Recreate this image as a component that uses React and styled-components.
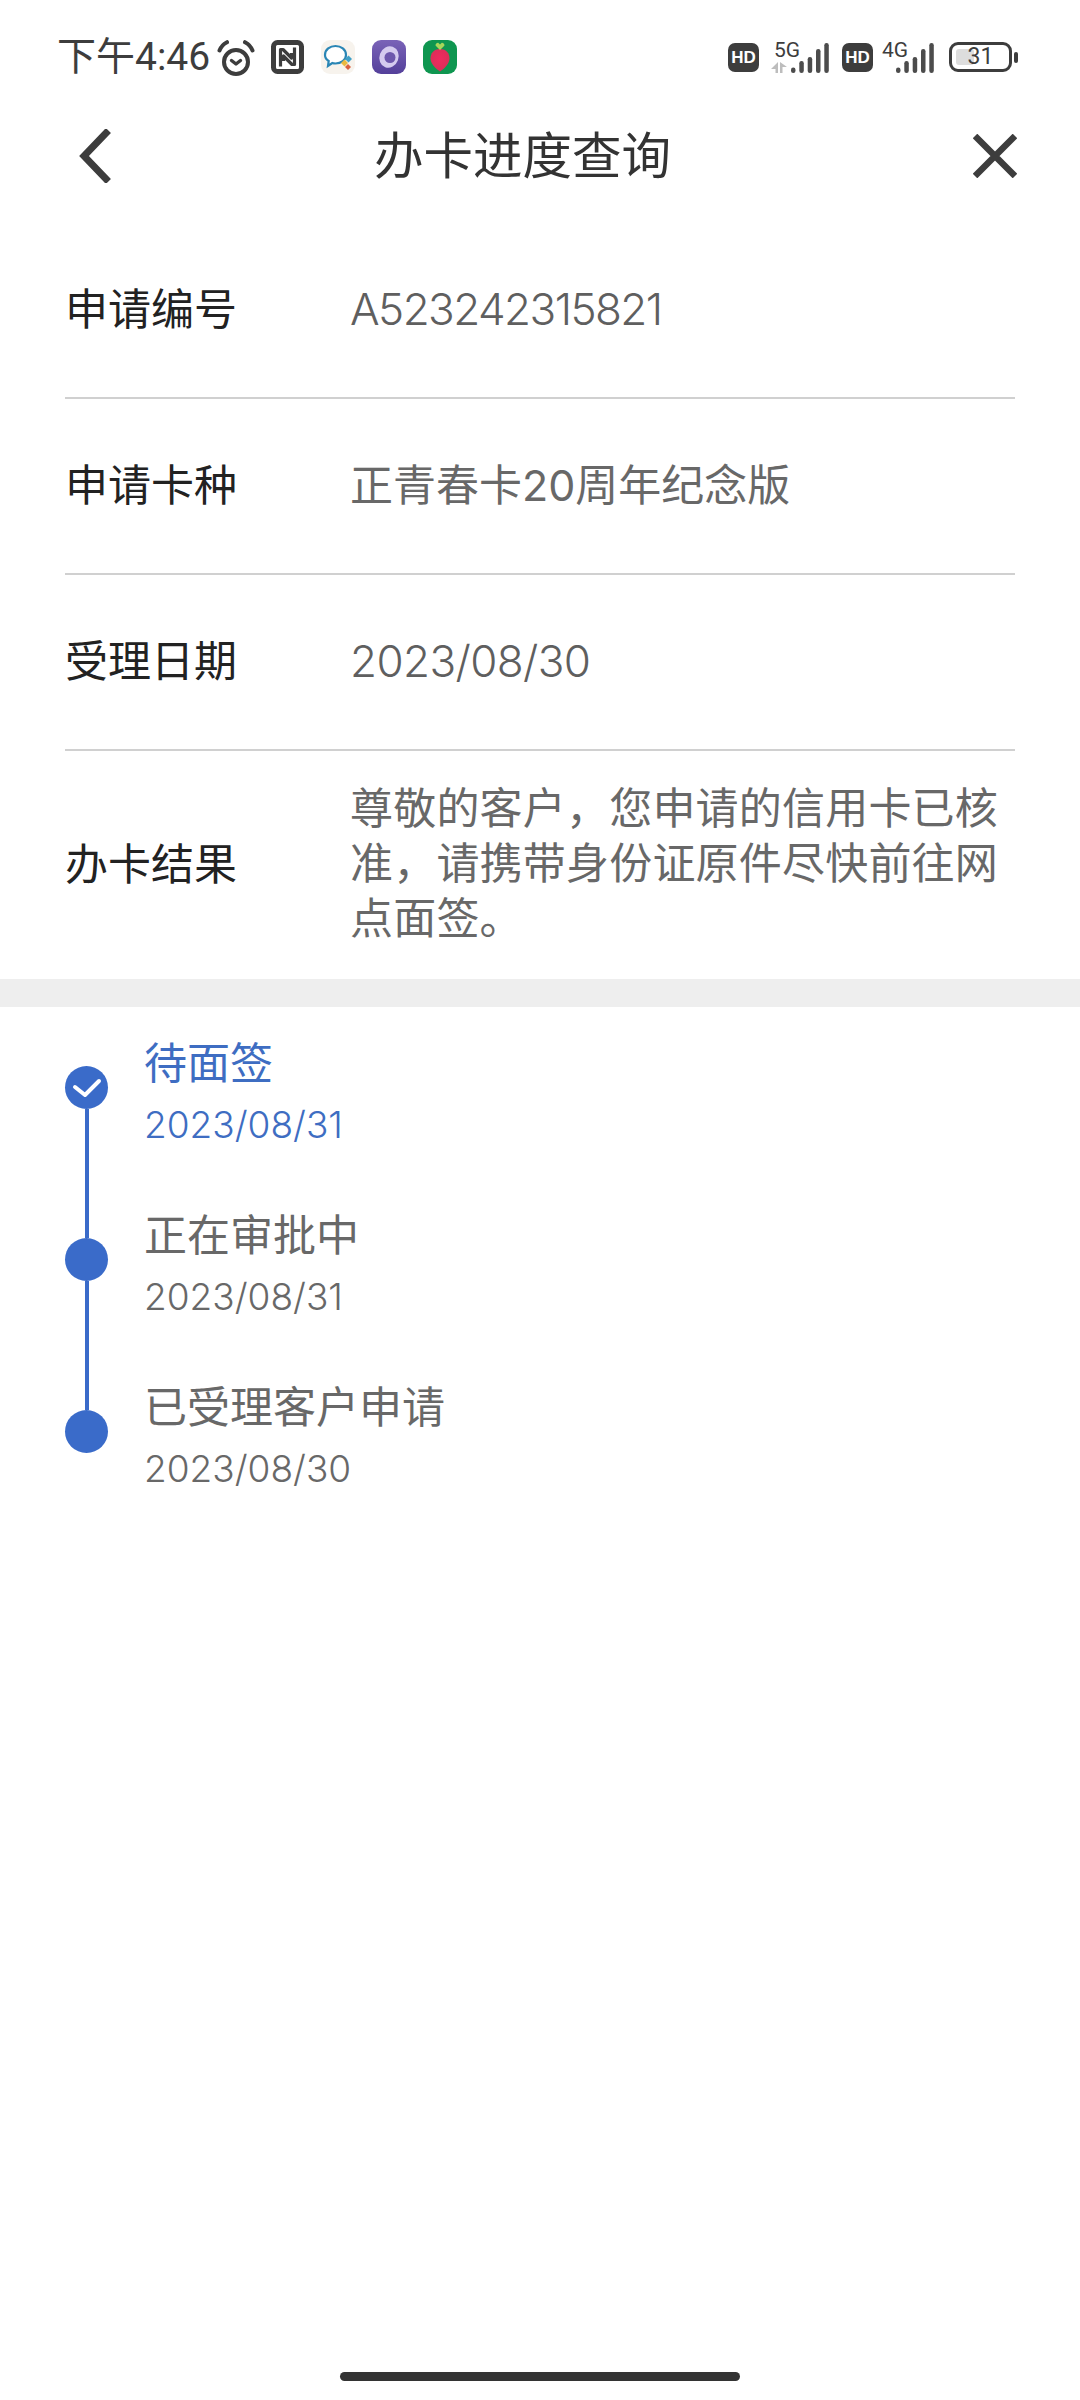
import React from "react";
import styled, { createGlobalStyle } from "styled-components";

const colors = {
  blue: "#3a6bc9",
  blueText: "#3e6dc2",
  title: "#333333",
  label: "#222222",
  value: "#686868",
  digits: "#5f5f5f",
  line: "#d0d0d0",
  band: "#eeeeee",
  icon: "#3d3d3d",
};

const rows = [
  { label: "申请编号", value: "A523242315821", latin: true, spacing: -1.55 },
  { label: "申请卡种", value: "正青春卡20周年纪念版" },
  { label: "受理日期", value: "2023/08/30", latin: true, spacing: -0.6 },
];

const steps = [
  { title: "待面签", date: "2023/08/31", active: true },
  { title: "正在审批中", date: "2023/08/31" },
  { title: "已受理客户申请", date: "2023/08/30" },
];

const Alarm = () => (
  <svg width="38" height="37" viewBox="0 0 38 37" fill="none" stroke={colors.icon} strokeWidth="4" strokeLinecap="round" strokeLinejoin="round">
    <circle cx="19" cy="23" r="12" />
    <path d="M14.5 21.5l4.500 3.500 4.500-3.500" strokeWidth="3.4" />
    <path d="M2.5 11.5C4 7.500 6.500 5 10 3.200M35.500 11.500C34 7.500 31.500 5 28 3.200" />
  </svg>
);

const Nfc = () => (
  <svg width="33" height="34" viewBox="0 0 33 34" fill="none" stroke={colors.icon} strokeLinejoin="round">
    <rect x="2.500" y="2.500" width="28" height="29" rx="4" strokeWidth="5" />
    <path d="M9.500 26.500V9.500h2.500l8.500 8.500v-5" strokeWidth="3.200" />
    <path d="M23.500 7.500v17h-2.500l-8.500-8.500v5" strokeWidth="3.200" />
  </svg>
);

const ChatApp = () => (
  <svg width="34" height="34" viewBox="0 0 34 34">
    <rect width="34" height="34" rx="9" fill="#f7f3ed" />
    <path d="M4 15c0-5.500 5-9 10.500-9S25 9.500 25 15c0 5-5 8.500-10.500 8.500-1.200 0-2.200-.1-3.200-.5L7 26l.7-5C5.200 19.500 4 17.500 4 15z" fill="#fff" stroke="#2a86b5" strokeWidth="2.200" />
    <path d="M24 19l3.500-3.500 3.500 3.500-3.500 3.500z" fill="#3fa0c8" />
    <path d="M20 23l3.500-3.500L27 23l-3.500 3.500z" fill="#e9b940" />
    <path d="M24 27l3-3 3 3-3 3z" fill="#d9603f" />
  </svg>
);

const RingApp = () => (
  <svg width="34" height="34" viewBox="0 0 34 34">
    <defs>
      <linearGradient id="ringBg" x1="0" y1="0" x2="0" y2="1">
        <stop offset="0" stopColor="#7a63b8" />
        <stop offset="1" stopColor="#54409a" />
      </linearGradient>
    </defs>
    <rect width="34" height="34" rx="9" fill="url(#ringBg)" />
    <ellipse cx="17" cy="17" rx="9.500" ry="11" fill="#d5cbef" transform="rotate(20 17 17)" />
    <circle cx="18" cy="17.500" r="5.500" fill="#6e58ad" />
  </svg>
);

const BerryApp = () => (
  <svg width="34" height="34" viewBox="0 0 34 34">
    <defs>
      <radialGradient id="berryFill" cx="0.5" cy="0.45" r="0.6">
        <stop offset="0" stopColor="#f02a5f" />
        <stop offset="1" stopColor="#d92f57" />
      </radialGradient>
    </defs>
    <rect width="34" height="34" rx="9" fill="#0f9650" />
    <path d="M17 9c6.500 0 9.500 4.500 9.500 9.500 0 5-5 10-9.500 13-4.500-3-9.500-8-9.500-13C7.500 13.500 10.500 9 17 9z" fill="url(#berryFill)" />
    <path d="M17 10l-4.500-4.500c0-2 2-3 3-2.500l1.500 1.500L18.500 3c1-.5 3 .5 3 2.500z" fill="#a8d65a" />
  </svg>
);

const Signal = () => (
  <svg width="38" height="30" viewBox="0 0 38 30" fill={colors.icon} opacity="0.92">
    <rect x="0" y="24.500" width="4.500" height="5.500" rx="2.200" />
    <rect x="8.300" y="18" width="4.500" height="12" rx="2.200" />
    <rect x="16.700" y="14" width="4.500" height="16" rx="2.200" />
    <rect x="25" y="6" width="4.500" height="24" rx="2.200" />
    <rect x="33.300" y="0" width="4.500" height="30" rx="2.200" />
  </svg>
);

const DataArrows = () => (
  <svg width="16" height="11" viewBox="0 0 16 11" fill="#bdbdbd">
    <path d="M7 0v11H4.500V7H0zM9 0l7 5h-4.500v6H9z" />
  </svg>
);

const Check = () => (
  <svg width="30" height="22" viewBox="0 0 30 22" fill="none" stroke="#fff" strokeWidth="4" strokeLinecap="round" strokeLinejoin="round">
    <path d="M3 10l10 8L27 4" />
  </svg>
);

export default function App() {
  return (
    <Page>
      <GlobalStyle />
      <StatusBar>
        <StatusLeft>
          <Time>下午4:46</Time>
          <Alarm />
          <NfcSlot>
            <Nfc />
          </NfcSlot>
          <AppIcons>
            <ChatApp />
            <RingApp />
            <BerryApp />
          </AppIcons>
        </StatusLeft>
        <StatusRight>
          <HdBadge>HD</HdBadge>
          <Network>
            <NetworkLabel $width={20}>
              <span>5G</span>
              <DataArrows />
            </NetworkLabel>
            <Signal />
          </Network>
          <HdBadge>HD</HdBadge>
          <Network $narrow>
            <NetworkLabel $width={17}>
              <span>4G</span>
            </NetworkLabel>
            <Signal />
          </Network>
          <Battery>
            <BatteryBody>
              <BatteryFill />
              <BatteryText>31</BatteryText>
            </BatteryBody>
            <BatteryCap />
          </Battery>
        </StatusRight>
      </StatusBar>

      <NavBar>
        <svg width="34" height="54" viewBox="0 0 34 54" fill="none" stroke={colors.icon} strokeWidth="7" strokeLinecap="square">
          <path d="M28 4L6 27l22 23" />
        </svg>
        <Title>办卡进度查询</Title>
        <svg width="44" height="44" viewBox="0 0 44 44" fill="none" stroke={colors.icon} strokeWidth="6.500" strokeLinecap="butt">
          <path d="M2 2l40 40M42 2L2 42" />
        </svg>
      </NavBar>

      <InfoList>
        {rows.map((row) => (
          <InfoRow key={row.label}>
            <InfoLabel>{row.label}</InfoLabel>
            <InfoValue $latin={row.latin} $spacing={row.spacing}>{row.value}</InfoValue>
          </InfoRow>
        ))}
        <ResultRow>
          <InfoLabel>办卡结果</InfoLabel>
          <ResultText $spacing={0.2}>尊敬的客户，您申请的信用卡已核准，请携带身份证原件尽快前往网点面签。</ResultText>
        </ResultRow>
      </InfoList>

      <Band />

      <Timeline>
        {steps.map((step, i) => (
          <Step key={step.title}>
            <Rail>
              <Segment $hidden={i === 0} $top />
              <Dot>{step.active && <Check />}</Dot>
              <Segment $hidden={i === steps.length - 1} />
            </Rail>
            <StepText $active={step.active}>
              <StepTitle>{step.title}</StepTitle>
              <StepDate>{step.date}</StepDate>
            </StepText>
          </Step>
        ))}
      </Timeline>

      <HomeBar />
    </Page>
  );
}

const GlobalStyle = createGlobalStyle`
  html, body {
    margin: 0;
    padding: 0;
    background: #fff;
  }
  * {
    box-sizing: border-box;
  }
  body {
    font-family: Inter, "Noto Sans CJK SC", sans-serif;
  }
`;

const Page = styled.div`
  width: 1080px;
  height: 2400px;
  display: flex;
  flex-direction: column;
  background: #fff;
  overflow: hidden;
`;

const StatusBar = styled.div`
  height: 114px;
  padding: 0 62px 0 57px;
  display: flex;
  align-items: center;
  justify-content: space-between;
`;

const StatusLeft = styled.div`
  display: flex;
  align-items: center;
`;

const Time = styled.span`
  width: 160px;
  white-space: nowrap;
  font-family: Roboto, "Noto Sans CJK SC", sans-serif;
  font-size: 39px;
  line-height: 44px;
  color: ${colors.icon};
`;

const NfcSlot = styled.div`
  display: flex;
  margin-left: 16px;
`;

const AppIcons = styled.div`
  display: flex;
  gap: 17px;
  margin-left: 17px;
`;

const StatusRight = styled.div`
  display: flex;
  align-items: center;
`;

const HdBadge = styled.span`
  width: 31px;
  height: 29px;
  border-radius: 7px;
  background: ${colors.icon};
  color: #fff;
  font: 900 17px/29px "Liberation Sans", sans-serif;
  text-align: center;
`;

const Network = styled.div`
  display: flex;
  align-items: flex-end;
  height: 32px;
  margin-left: ${(p) => (p.$narrow ? "6px" : "12px")};
  margin-right: 13px;
`;

const NetworkLabel = styled.div`
  display: flex;
  flex-direction: column;
  align-items: flex-start;
  width: ${(p) => p.$width}px;
  height: 32px;
  font-family: Roboto, sans-serif;
  font-size: 21px;
  line-height: 18px;
  white-space: nowrap;
  color: ${colors.icon};
  span {
    margin-left: 3px;
  }
  svg {
    margin-top: 3px;
  }
`;

const Battery = styled.div`
  display: flex;
  align-items: center;
  gap: 2px;
  margin-left: 2px;
`;

const BatteryBody = styled.div`
  position: relative;
  width: 63px;
  height: 30px;
  border: 3px solid ${colors.icon};
  border-radius: 9px;
  display: flex;
  align-items: center;
  justify-content: center;
`;

const BatteryFill = styled.div`
  position: absolute;
  left: 4px;
  top: 4px;
  bottom: 4px;
  width: 18px;
  background: #dddddd;
  border-radius: 3px;
`;

const BatteryText = styled.span`
  position: relative;
  font-family: Roboto, sans-serif;
  font-size: 23px;
  line-height: 24px;
  color: ${colors.icon};
`;

const BatteryCap = styled.div`
  width: 4px;
  height: 11px;
  border-radius: 2px;
  background: ${colors.icon};
`;

const NavBar = styled.div`
  height: 82px;
  padding: 2px 63px 0 78px;
  display: flex;
  align-items: center;
`;

const Title = styled.h1`
  margin: 0 auto 0 262px;
  font-size: 49.500px;
  font-weight: 400;
  line-height: 60px;
  color: ${colors.title};
`;

const InfoList = styled.div`
  margin-top: 27px;
  padding: 0 65px;
`;

const InfoRow = styled.div`
  height: 176px;
  padding-bottom: 3px;
  display: flex;
  align-items: center;
  border-bottom: 2px solid ${colors.line};
`;

const ResultRow = styled(InfoRow)`
  height: 228px;
  border-bottom: none;
`;

const InfoLabel = styled.div`
  flex: 0 0 285px;
  font-size: 43px;
  line-height: 56px;
  color: ${colors.label};
`;

const InfoValue = styled.div`
  font-size: ${(p) => (p.$latin ? "44px" : "43px")};
  font-weight: ${(p) => (p.$latin ? 300 : 400)};
  letter-spacing: ${(p) => p.$spacing || 0}px;
  line-height: 56px;
  color: ${(p) => (p.$latin ? colors.digits : colors.value)};
`;

const ResultText = styled(InfoValue)`
  flex: 1;
  line-height: 55px;
`;

const Band = styled.div`
  height: 28px;
  background: ${colors.band};
`;

const Timeline = styled.div`
  padding-left: 65px;
`;

const Step = styled.div`
  height: 172px;
  display: flex;
`;

const Rail = styled.div`
  width: 43px;
  display: flex;
  flex-direction: column;
  align-items: center;
`;

const Segment = styled.div`
  width: 4px;
  height: ${(p) => (p.$top ? "59px" : "70px")};
  background: ${(p) => (p.$hidden ? "transparent" : colors.blue)};
`;

const Dot = styled.div`
  width: 43px;
  height: 43px;
  flex: none;
  border-radius: 50%;
  background: ${colors.blue};
  display: flex;
  align-items: center;
  justify-content: center;
`;

const StepText = styled.div`
  margin-left: 36px;
  padding-top: 25px;
  color: ${(p) => (p.$active ? colors.blueText : colors.value)};
`;

const StepTitle = styled.div`
  font-size: 43px;
  line-height: 62px;
`;

const StepDate = styled.div`
  font-size: 37px;
  font-weight: 300;
  line-height: 62px;
`;

const HomeBar = styled.div`
  width: 400px;
  height: 9px;
  border-radius: 5px;
  background: #333;
  margin: auto auto 19px;
`;
